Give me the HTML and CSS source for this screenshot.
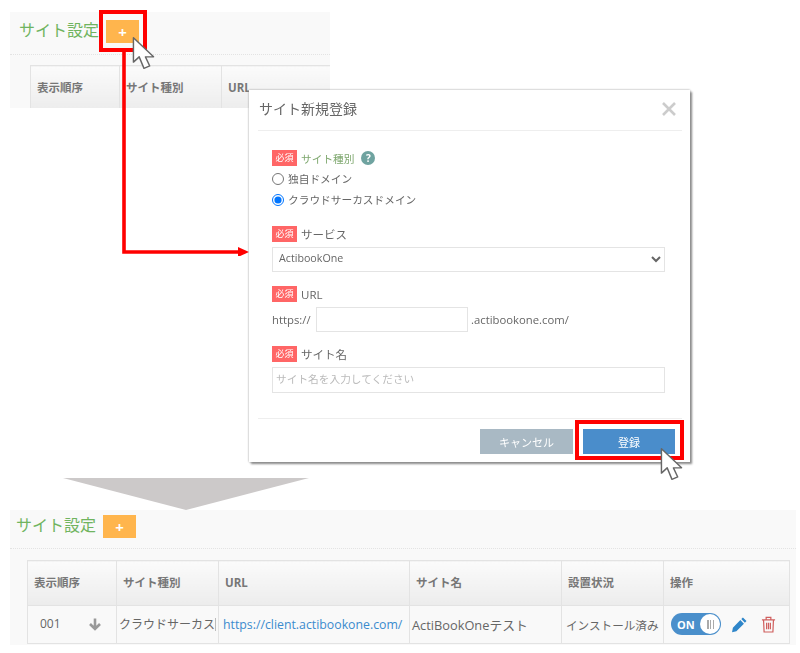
FILE: index.html
```html
<!DOCTYPE html>
<html lang="ja">
<head>
    <meta charset="UTF-8">
    <meta name="viewport" content="width=device-width, initial-scale=1.0">
    <title>サイト設定</title>
    <link rel="stylesheet" href="styles.css">
</head>
<body>
    <div class="canvas">
        <!-- step 1: list before adding -->
        <section class="panel panel-top">
            <div class="panel-head">
                <h2 class="panel-title">サイト設定</h2>
                <button class="add-button">+</button>
            </div>
            <table class="site-table">
                <colgroup>
                    <col class="col-order"><col class="col-type"><col>
                </colgroup>
                <tr><th>表示順序</th><th>サイト種別</th><th>URL</th></tr>
            </table>
        </section>

        <div class="triangle"></div>

        <!-- step 3: list after adding -->
        <section class="panel panel-bottom">
            <div class="panel-head">
                <h2 class="panel-title">サイト設定</h2>
                <button class="add-button">+</button>
            </div>
            <table class="site-table">
                <colgroup>
                    <col class="col-order"><col class="col-type"><col class="col-url">
                    <col class="col-name"><col class="col-status"><col>
                </colgroup>
                <tr>
                    <th>表示順序</th><th>サイト種別</th><th>URL</th>
                    <th>サイト名</th><th>設置状況</th><th>操作</th>
                </tr>
                <tr>
                    <td>
                        <div class="order-cell">
                            <span>001</span>
                            <svg class="icon-down" viewBox="0 0 14 14"><path d="M7 1.500v10M2 7l5 5 5-5" fill="none" stroke="#999" stroke-width="2.600"/></svg>
                        </div>
                    </td>
                    <td><span class="clip-text">クラウドサーカス</span></td>
                    <td class="cell-url"><a class="site-link" href="#">https://client.actibookone.com/</a></td>
                    <td class="cell-name">ActiBookOneテスト</td>
                    <td class="cell-status">インストール済み</td>
                    <td>
                        <div class="actions">
                            <span class="toggle"><span class="toggle-label">ON</span><span class="toggle-knob"></span></span>
                            <svg class="icon-edit" viewBox="0 0 18 18"><path d="M12.600 1.600l3.800 3.800-1.700 1.700-3.800-3.800zM9.900 4.300l3.800 3.800-8 8-4.600 1 .9-4.700z" fill="#2f86c9"/></svg>
                            <svg class="icon-trash" viewBox="0 0 16 18"><path d="M1 4h14M5.500 4V1.500h5V4M2.700 4l.6 13h9.400l.6-13M6 7v7M8 7v7M10 7v7" fill="none" stroke="#d0605f" stroke-width="1.300"/></svg>
                        </div>
                    </td>
                </tr>
            </table>
        </section>

        <svg class="flow-arrow" viewBox="0 0 130 204">
            <path d="M2 0V200H118" fill="none" stroke="#f00" stroke-width="3.600"/>
            <path d="M116 195l11 5-11 5z" fill="#f00"/>
        </svg>

        <!-- step 2: registration dialog -->
        <div class="modal">
            <div class="modal-header">
                <h3 class="modal-title">サイト新規登録</h3>
                <svg class="modal-close" viewBox="0 0 16 16"><path d="M2 2l12 12M14 2L2 14" stroke="#ccc" stroke-width="2.600" fill="none"/></svg>
            </div>
            <div class="modal-body">
                <div class="field">
                    <div class="field-label">
                        <span class="required">必須</span>
                        <span class="label-green">サイト種別</span>
                        <span class="help">?</span>
                    </div>
                    <div class="radio-group">
                        <label class="radio-row"><input type="radio" name="domain">独自ドメイン</label>
                        <label class="radio-row"><input type="radio" name="domain" checked>クラウドサーカスドメイン</label>
                    </div>
                </div>
                <div class="field">
                    <div class="field-label"><span class="required">必須</span><span>サービス</span></div>
                    <select class="form-control"><option>ActibookOne</option></select>
                </div>
                <div class="field">
                    <div class="field-label"><span class="required">必須</span><span>URL</span></div>
                    <div class="url-row">
                        <span class="url-prefix">https://</span>
                        <input class="form-control url-input" type="text">
                        <span>.actibookone.com/</span>
                    </div>
                </div>
                <div class="field">
                    <div class="field-label"><span class="required">必須</span><span>サイト名</span></div>
                    <input class="form-control name-input" type="text" placeholder="サイト名を入力してください">
                </div>
            </div>
            <div class="modal-footer">
                <button class="btn btn-cancel">キャンセル</button>
                <button class="btn btn-submit">登録</button>
            </div>
        </div>

        <!-- annotations -->
        <div class="highlight highlight-add"></div>
        <div class="highlight highlight-submit"></div>
        <svg class="cursor cursor-add" viewBox="0 0 24 36"><path d="M1.500 1.500V27l6-5.500 5 12 6-2.500-4.500-9.500h8.500z" fill="#fff" stroke="#666" stroke-width="1.500" stroke-linejoin="round"/></svg>
        <svg class="cursor cursor-submit" viewBox="0 0 24 36"><path d="M1.500 1.500V27l6-5.500 5 12 6-2.500-4.500-9.500h8.500z" fill="#fff" stroke="#666" stroke-width="1.500" stroke-linejoin="round"/></svg>
    </div>
</body>
</html>
```

FILE: styles.css
```css
* {
    box-sizing: border-box;
}
body {
    margin: 0;
    background: white;
    font-family: 'Open Sans', 'Noto Sans CJK JP', sans-serif;
    color: #666;
    font-size: 11px;
}
.canvas {
    position: relative;
    width: 800px;
    height: 653px;
    overflow: hidden;
    filter: blur(0.4px);
}

/* panels */
.panel {
    position: absolute;
    background: #f9f9f9;
    overflow: hidden;
}
.panel-top {
    left: 10px;
    top: 12px;
    width: 320px;
    height: 96px;
    padding: 8px 0 0 10px;
}
.panel-bottom {
    left: 10px;
    top: 510px;
    width: 786px;
    height: 135px;
    padding: 5px 0 0 7px;
}
.panel-head {
    display: flex;
    align-items: center;
    height: 23px;
    gap: 7px;
}
.panel-title {
    margin: 0 0 6px -1px;
    font-size: 16px;
    font-weight: normal;
    color: #70b45f;
    white-space: nowrap;
}
.add-button {
    width: 33px;
    height: 23px;
    padding: 0;
    border: none;
    background: #ffb54d;
    color: white;
    font: bold 15px/20px 'Open Sans', sans-serif;
}
.site-table {
    border-collapse: collapse;
    table-layout: fixed;
    background: #f9f9f9;
}
.panel-top .site-table {
    width: 320px;
    margin: 22px 0 0 10px;
}
.panel-top::after,
.panel-bottom::after {
    content: "";
    position: absolute;
    left: 0;
    right: 0;
    border-top: 1px dotted #e3e3e3;
}
.panel-top::after {
    top: 42px;
}
.panel-bottom::after {
    top: 38px;
}
.panel-bottom .site-table {
    width: 763px;
    margin: 22px 0 0 10px;
}
.col-order {
    width: 89px;
}
.col-type {
    width: 102px;
}
.col-url {
    width: 191px;
}
.col-name {
    width: 152px;
}
.col-status {
    width: 102px;
}
.site-table th,
.site-table td {
    border: 1px solid #e3e3e3;
    text-align: left;
    overflow: hidden;
    white-space: nowrap;
}
.site-table th {
    height: 45px;
    padding: 0 6px 2px;
    background: linear-gradient(#fbfbfb, #ececec);
    font-size: 11.500px;
    color: #777;
}
.site-table td {
    height: 38px;
    padding: 0 2px;
    font-size: 12px;
}
.clip-text {
    display: block;
    width: 97px;
    border-right: 1px solid #bbb;
    line-height: 13px;
}
.site-table .cell-url {
    padding-left: 4px;
}
.site-link {
    color: #3b8bce;
    text-decoration: none;
    font-size: 12.300px;
}
.site-table .cell-name {
    font-size: 12.800px;
}
.site-table .cell-status {
    padding-left: 4px;
    font-size: 11.600px;
}
.order-cell {
    display: flex;
    align-items: center;
    justify-content: space-between;
    padding: 0 12px 3px 10px;
}
.icon-down {
    width: 14px;
    height: 14px;
    margin-top: 2px;
}
.actions {
    display: flex;
    align-items: center;
    gap: 10px;
    padding: 0 0 1px 5px;
}
.toggle {
    display: flex;
    align-items: center;
    justify-content: space-between;
    width: 50px;
    height: 22px;
    padding: 0 1px 0 6px;
    border-radius: 11px;
    background: #4a8fcb;
    color: white;
    font-weight: bold;
    font-size: 11px;
}
.toggle-knob {
    width: 20px;
    height: 20px;
    border-radius: 50%;
    background: white repeating-linear-gradient(90deg, #aaa 0 1.500px, white 1.500px 3px) center / 7px 9px no-repeat;
}
.icon-edit {
    width: 17px;
    height: 17px;
}
.icon-trash {
    width: 15px;
    height: 17px;
    margin-left: 3px;
}

.triangle {
    position: absolute;
    left: 63px;
    top: 478px;
    width: 246px;
    height: 32px;
    background: #ccc9c9;
    clip-path: polygon(0 0, 100% 0, 50% 100%);
}
.flow-arrow {
    position: absolute;
    left: 122px;
    top: 52px;
    width: 130px;
    height: 204px;
}

/* dialog */
.modal {
    position: absolute;
    left: 249px;
    top: 90px;
    width: 441px;
    height: 372px;
    background: white;
    box-shadow: 0 0 2px #999, 2px 2px 2px #888;
}
.modal-header {
    display: flex;
    align-items: center;
    justify-content: space-between;
    height: 41px;
    margin: 0 8px 0 9px;
    padding: 0 5px 2px 1px;
    border-bottom: 1px solid #eee;
}
.modal-title {
    margin: 0 0 2px;
    font-size: 14px;
    font-weight: normal;
    color: #666;
}
.modal-close {
    width: 16px;
    height: 16px;
}
.modal-body {
    display: flex;
    flex-direction: column;
    gap: 14px;
    padding: 19px 25px 0 23px;
}
.field-label {
    display: flex;
    align-items: center;
    gap: 4px;
    height: 16px;
    margin-bottom: 5px;
    font-size: 11.500px;
}
.required {
    display: inline-block;
    width: 25px;
    height: 16px;
    background: #ff6666;
    color: white;
    font-size: 9px;
    line-height: 16px;
    text-align: center;
}
.label-green {
    color: #7fa86f;
    font-size: 10.700px;
}
.help {
    width: 14px;
    height: 14px;
    margin-left: 3px;
    border-radius: 50%;
    background: #6fa3a0;
    color: white;
    font-size: 10px;
    font-weight: bold;
    line-height: 14px;
    text-align: center;
}
.radio-group {
    margin-top: -3px;
    padding-bottom: 2px;
}
.radio-row {
    display: flex;
    align-items: center;
    gap: 4px;
    height: 21px;
    font-size: 10.700px;
}
.radio-row input {
    width: 12px;
    height: 12px;
    margin: 0;
}
.form-control {
    display: block;
    height: 25px;
    border: 1px solid #e4e4e4;
    background: white;
    color: #666;
    font: 10.700px 'Open Sans', 'Noto Sans CJK JP', sans-serif;
    outline: none;
}
select.form-control {
    width: 393px;
    padding: 0 0 3px 2px;
}
.url-row {
    display: flex;
    align-items: center;
    gap: 3px;
    font-size: 11.300px;
}
.url-prefix {
    width: 41px;
}
.url-input {
    width: 152px;
}
.name-input {
    width: 393px;
    height: 26px;
    padding: 0 3px 3px;
}
.name-input::placeholder {
    color: #bbb;
}
.modal-footer {
    display: flex;
    justify-content: flex-end;
    gap: 10px;
    margin: 25px 8px 0 9px;
    padding: 10px 7px 0 0;
    border-top: 1px solid #eee;
}
.btn {
    height: 25px;
    border: none;
    color: white;
    font: 11px 'Noto Sans CJK JP', sans-serif;
}
.btn-cancel {
    width: 93px;
    background: #a9b9c4;
}
.btn-submit {
    width: 92px;
    background: #4a8dcb;
}

/* annotations */
.highlight {
    position: absolute;
    border: 4px solid #f00;
}
.highlight-add {
    left: 99px;
    top: 10px;
    width: 48px;
    height: 42px;
}
.highlight-submit {
    left: 575px;
    top: 420px;
    width: 109px;
    height: 40px;
}
.cursor {
    position: absolute;
    width: 23px;
    height: 35px;
}
.cursor-add {
    left: 132px;
    top: 36px;
}
.cursor-submit {
    left: 660px;
    top: 447px;
}
```
